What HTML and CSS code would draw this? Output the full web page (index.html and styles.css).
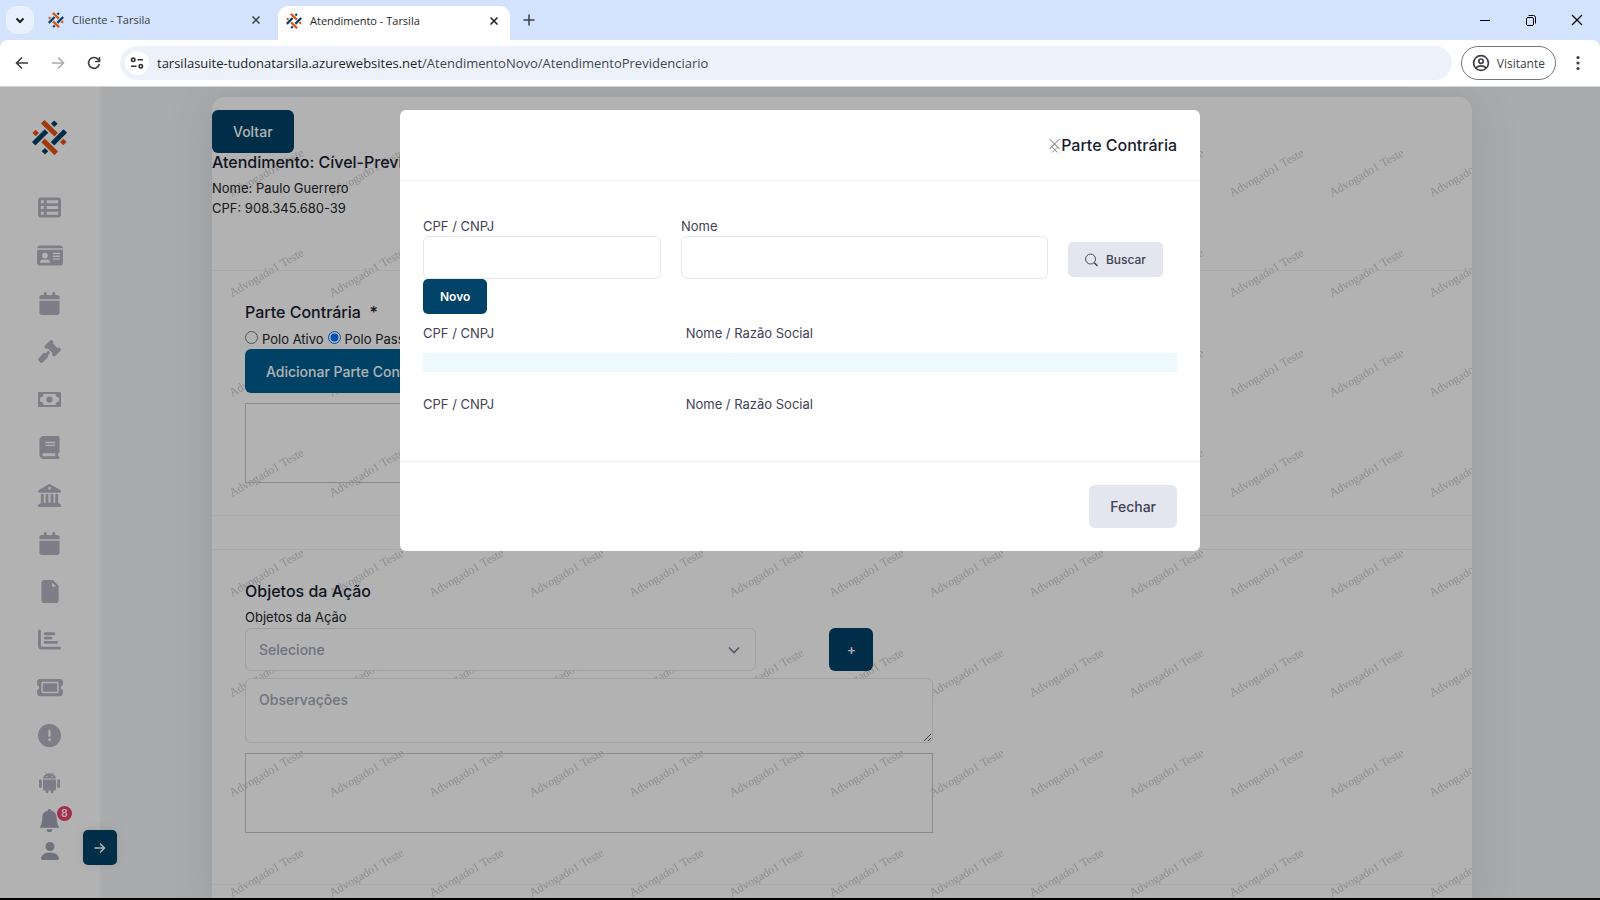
FILE: index.html
```html
<!DOCTYPE html>
<html lang="pt-BR">
<head>
  <meta charset="UTF-8">
  <meta name="viewport" content="width=device-width, initial-scale=1.0">
  <title>Atendimento - Tarsila</title>
  <link rel="stylesheet" href="styles.css">
</head>
<body>
  <!-- shared logo -->
  <svg width="0" height="0" class="defs" aria-hidden="true">
    <symbol id="logo" viewBox="0 0 35 35">
      <g class="logo-orange">
        <path d="M10.7 1.8L24.2 14.8M11 20.4L24.3 33.4"/>
        <path class="dot" d="M3.700 9.700L7 13L3.700 16.300L.400 13zM31.300 18.700L34.600 22L31.300 25.300L28 22z"/>
      </g>
      <g class="logo-blue">
        <path d="M14.5 11L1.7 23.8M33.3 11L20.5 23.8"/>
        <path class="dot" d="M22.300 .400L25.600 3.700L22.300 7L19 3.700zM13 28L16.300 31.300L13 34.600L9.700 31.300z"/>
      </g>
    </symbol>
  </svg>

  <!-- Browser window -->
  <header class="browser">
    <div class="tabs">
      <button class="tab-search" aria-label="Pesquisar guias"><svg width="12" height="12" viewBox="0 0 12 12"><path d="M2.5 4.5L6 8l3.5-3.5" fill="none" stroke="#1f1f1f" stroke-width="2"/></svg></button>
      <div class="tab">
        <svg class="favicon"><use href="#logo"/></svg>
        <span>Cliente - Tarsila</span>
        <button aria-label="Fechar guia"><svg width="8" height="8" viewBox="0 0 8 8"><path d="M.5.5l7 7M7.5.5l-7 7" stroke="#3c3f43" stroke-width="1.5"/></svg></button>
      </div>
      <div class="tab tab-active">
        <svg class="favicon"><use href="#logo"/></svg>
        <span>Atendimento - Tarsila</span>
        <button aria-label="Fechar guia"><svg width="8" height="8" viewBox="0 0 8 8"><path d="M.5.5l7 7M7.5.5l-7 7" stroke="#1f1f1f" stroke-width="1.5"/></svg></button>
      </div>
      <button class="tab-new" aria-label="Nova guia"><svg width="12" height="12" viewBox="0 0 12 12"><path d="M6 .5v11M.5 6h11" stroke="#3c3f43" stroke-width="1.5"/></svg></button>
      <div class="window-buttons">
        <button aria-label="Minimizar"><svg width="12" height="12" viewBox="0 0 12 12"><path d="M1 6.5h10" stroke="#000"/></svg></button>
        <button aria-label="Restaurar"><svg width="12" height="12" viewBox="0 0 12 12"><g fill="none" stroke="#000"><rect x="1.5" y="3.5" width="7" height="8" rx="1.5"/><path d="M3.5 1.5h5a2 2 0 0 1 2 2v6"/></g></svg></button>
        <button aria-label="Fechar"><svg width="12" height="12" viewBox="0 0 12 12"><path d="M1 1l10 10M11 1L1 11" stroke="#000" stroke-width="1.2"/></svg></button>
      </div>
    </div>
    <div class="toolbar">
      <button class="nav-btn" aria-label="Voltar página"><svg width="14" height="14" viewBox="0 0 14 14"><path d="M13 7H2M7 1.5L1.5 7 7 12.5" fill="none" stroke="#3c3f43" stroke-width="1.6"/></svg></button>
      <button class="nav-btn" aria-label="Avançar página"><svg width="14" height="14" viewBox="0 0 14 14"><path d="M1 7h11M7 1.5L12.500 7 7 12.5" fill="none" stroke="#a9abae" stroke-width="1.6"/></svg></button>
      <button class="nav-btn" aria-label="Recarregar"><svg width="14" height="14" viewBox="0 0 14 14"><path d="M12.300 8A5.400 5.400 0 1 1 11.200 3.500L12.500 5M12.500 1v4.500H8.200" fill="none" stroke="#3c3f43" stroke-width="1.6"/></svg></button>
      <div class="address">
        <span class="site-info"><svg width="14" height="12" viewBox="0 0 14 12"><g fill="none" stroke="#303236" stroke-width="1.6"><circle cx="3.2" cy="2.8" r="1.7"/><path d="M7.500 2.800H13M1 9.200h5.500"/><circle cx="10.800" cy="9.200" r="1.700"/></g></svg></span>
        <span class="url">tarsilasuite-tudonatarsila.azurewebsites.net<span>/AtendimentoNovo/AtendimentoPrevidenciario</span></span>
      </div>
      <button class="profile"><svg width="18" height="18" viewBox="0 0 18 18"><g fill="none" stroke="#3c3f43" stroke-width="1.7"><circle cx="9" cy="9" r="7.400"/><circle cx="9" cy="7.200" r="2.200"/><path d="M3.800 13.800c3-2.600 7.400-2.600 10.400 0"/></g></svg>Visitante</button>
      <button class="browser-menu" aria-label="Menu"><svg width="4" height="16" viewBox="0 0 4 16"><g fill="#3c3f43"><circle cx="2" cy="2.500" r="1.600"/><circle cx="2" cy="8" r="1.600"/><circle cx="2" cy="13.500" r="1.600"/></g></svg></button>
    </div>
  </header>

  <div class="app">
    <nav class="sidebar">
      <a href="#" class="brand" aria-label="Tarsila"><svg width="35" height="35"><use href="#logo"/></svg></a>
      <a href="#" aria-label="Lista"><svg width="23" height="23" viewBox="0 0 512 512"><path d="M0 96C0 60.700 28.700 32 64 32H448c35.300 0 64 28.700 64 64V416c0 35.300-28.700 64-64 64H64c-35.300 0-64-28.700-64-64V96zm64 0v64h64V96H64zm384 0H192v64H448V96zM64 224v64h64V224H64zm384 0H192v64H448V224zM64 352v64h64V352H64zm384 0H192v64H448V352z"/></svg></a>
      <a href="#" aria-label="Clientes"><svg width="26" height="23" viewBox="0 0 576 512"><path d="M0 96H576c0-35.300-28.700-64-64-64H64C28.700 32 0 60.700 0 96zm0 32V416c0 35.300 28.700 64 64 64H512c35.300 0 64-28.700 64-64V128H0zM64 405.300c0-29.500 23.900-53.300 53.300-53.300H234.700c29.500 0 53.300 23.900 53.300 53.300c0 5.900-4.800 10.700-10.700 10.700H74.700c-5.900 0-10.700-4.800-10.700-10.700zM176 192a64 64 0 1 1 0 128 64 64 0 1 1 0-128zM352 192H512v32H352zM352 256H512v32H352zM352 320H512v32H352z"/></svg></a>
      <a href="#" aria-label="Agenda"><svg width="21" height="23" viewBox="0 0 448 512"><path d="M96 32V64H48C21.500 64 0 85.500 0 112v48H448V112c0-26.500-21.500-48-48-48H352V32c0-17.700-14.300-32-32-32s-32 14.300-32 32V64H160V32c0-17.700-14.300-32-32-32S96 14.300 96 32zM448 192H0V464c0 26.500 21.500 48 48 48H400c26.500 0 48-21.500 48-48V192z"/></svg></a>
      <a href="#" aria-label="Processos"><svg width="23" height="23" viewBox="0 0 512 512"><path d="M318.600 9.400c-12.500-12.500-32.800-12.500-45.300 0l-120 120c-12.500 12.500-12.500 32.800 0 45.300l16 16c12.500 12.500 32.800 12.500 45.300 0l4-4L325.400 293.400l-4 4c-12.500 12.500-12.500 32.800 0 45.300l16 16c12.500 12.500 32.800 12.500 45.300 0l120-120c12.500-12.500 12.500-32.800 0-45.300l-16-16c-12.500-12.500-32.800-12.500-45.300 0l-4 4L330.600 74.600l4-4c12.500-12.500 12.500-32.800 0-45.300l-16-16zm-152 288c-12.500-12.500-32.800-12.500-45.300 0l-112 112c-12.500 12.500-12.500 32.800 0 45.300l48 48c12.500 12.500 32.800 12.500 45.300 0l112-112c12.500-12.500 12.500-32.800 0-45.300l-1.400-1.400L272 285.300 226.700 240 168 298.700l-1.400-1.400z"/></svg></a>
      <a href="#" aria-label="Financeiro"><svg width="23" height="15" viewBox="0 0 23 15"><path d="M1 0h21a1 1 0 0 1 1 1v13a1 1 0 0 1-1 1H1a1 1 0 0 1-1-1V1a1 1 0 0 1 1-1zM5.500 2A3.500 3.500 0 0 1 2 5.500v4A3.500 3.500 0 0 1 5.500 13h12A3.500 3.500 0 0 1 21 9.500v-4A3.500 3.500 0 0 1 17.500 2zM11.500 4.400a3.100 3.100 0 1 0 0 6.200 3.100 3.100 0 0 0 0-6.200z"/></svg></a>
      <a href="#" aria-label="Biblioteca"><svg width="21" height="23" viewBox="0 0 448 512"><path d="M96 0C43 0 0 43 0 96V416c0 53 43 96 96 96H416c17.700 0 32-14.300 32-32s-14.300-32-32-32V384c17.700 0 32-14.300 32-32V32c0-17.700-14.300-32-32-32H96zm0 384H352v64H96c-17.700 0-32-14.300-32-32s14.300-32 32-32zm32-240c0-8.800 7.200-16 16-16H336c8.800 0 16 7.200 16 16s-7.200 16-16 16H144c-8.800 0-16-7.200-16-16zm16 48H336c8.800 0 16 7.200 16 16s-7.200 16-16 16H144c-8.800 0-16-7.200-16-16s7.200-16 16-16z"/></svg></a>
      <a href="#" aria-label="Tribunais"><svg width="23" height="23" viewBox="0 0 512 512"><path d="M240.100 4.200c9.800-5.600 21.900-5.600 31.800 0L448 104l47.900 28.300c12.600 7.200 18.800 22 15.100 36s-16.400 23.800-30.900 23.800H32c-14.500 0-27.200-9.800-30.900-23.800s2.500-28.800 15.100-36L64 104zM64 224h64V416h40V224h64V416h48V224h64V416h40V224h64V420.300l49.800 33.100c11.700 7.800 17 22.400 12.900 35.900S494.100 512 480 512H32c-14.100 0-26.500-9.200-30.600-22.700s1.100-28.100 12.900-35.900L64 420.300V224zM256 128a32 32 0 1 0 0-64 32 32 0 1 0 0 64z"/></svg></a>
      <a href="#" aria-label="Calendário"><svg width="21" height="23" viewBox="0 0 448 512"><path d="M96 32V64H48C21.500 64 0 85.500 0 112v48H448V112c0-26.500-21.500-48-48-48H352V32c0-17.700-14.300-32-32-32s-32 14.300-32 32V64H160V32c0-17.700-14.300-32-32-32S96 14.300 96 32zM448 192H0V464c0 26.500 21.500 48 48 48H400c26.500 0 48-21.500 48-48V192z"/></svg></a>
      <a href="#" aria-label="Documentos"><svg width="18" height="23" viewBox="0 0 384 512"><path d="M64 0H256L384 128V448c0 35.300-28.700 64-64 64H64c-35.300 0-64-28.700-64-64V64C0 28.700 28.700 0 64 0zM236 56V128c0 12 8 20 20 20H326z"/></svg></a>
      <a href="#" aria-label="Relatórios"><svg width="23" height="23" viewBox="0 0 512 512"><path d="M32 32c17.700 0 32 14.300 32 32V400c0 8.800 7.200 16 16 16H480c17.700 0 32 14.300 32 32s-14.300 32-32 32H80c-44.200 0-80-35.800-80-80V64C0 46.300 14.300 32 32 32zm96 96c0-17.700 14.300-32 32-32H352c17.700 0 32 14.300 32 32s-14.300 32-32 32H160c-17.700 0-32-14.300-32-32zm32 64H288c17.700 0 32 14.300 32 32s-14.300 32-32 32H160c-17.700 0-32-14.300-32-32s14.300-32 32-32zm0 96H416c17.700 0 32 14.300 32 32s-14.300 32-32 32H160c-17.700 0-32-14.300-32-32s14.300-32 32-32z"/></svg></a>
      <a href="#" aria-label="Tickets"><svg width="26" height="23" viewBox="0 0 576 512"><path d="M64 64C28.700 64 0 92.700 0 128v64c0 8.800 7.400 15.700 15.700 18.600C34.500 217.100 48 235 48 256s-13.500 38.900-32.300 45.400C7.400 304.300 0 311.200 0 320v64c0 35.300 28.700 64 64 64H512c35.300 0 64-28.700 64-64V320c0-8.800-7.400-15.700-15.700-18.600C541.500 294.900 528 277 528 256s13.500-38.900 32.300-45.400c8.300-2.900 15.700-9.800 15.700-18.600V128c0-35.300-28.700-64-64-64H64zM128 160H448V352H128zM96 160c0-17.700 14.300-32 32-32H448c17.700 0 32 14.300 32 32V352c0 17.700-14.300 32-32 32H128c-17.700 0-32-14.300-32-32V160z"/></svg></a>
      <a href="#" aria-label="Avisos"><svg width="23" height="23" viewBox="0 0 512 512"><path d="M256 512A256 256 0 1 0 256 0a256 256 0 1 0 0 512zm0-384c13.300 0 24 10.700 24 24V264c0 13.300-10.700 24-24 24s-24-10.700-24-24V152c0-13.300 10.700-24 24-24zM224 352a32 32 0 1 1 64 0 32 32 0 1 1-64 0z"/></svg></a>
      <a href="#" aria-label="Aplicativo"><svg width="21" height="22" viewBox="0 0 21 22"><path d="M4 6.500A6.500 5.500 0 0 1 7.300 2L6 .4l.4-.3 1.400 1.600a8 8 0 0 1 5.400 0L14.600.1l.4.300L13.700 2A6.500 5.500 0 0 1 17 6.500zM7.700 3.700a.7.700 0 1 0 0 1.400.7.700 0 0 0 0-1.400zM13.300 3.700a.7.700 0 1 0 0 1.400.7.700 0 0 0 0-1.400zM4 7.500h13V17a1.500 1.500 0 0 1-1.500 1.500h-1V20a1.400 1.400 0 0 1-2.800 0v-1.500H9.300V20a1.400 1.400 0 0 1-2.800 0v-1.500h-1A1.500 1.500 0 0 1 4 17zM0 8.700a1.400 1.400 0 0 1 2.800 0v6a1.400 1.400 0 0 1-2.800 0zM18.200 8.700a1.400 1.400 0 0 1 2.800 0v6a1.400 1.400 0 0 1-2.800 0z"/></svg></a>
      <a href="#" class="bell" aria-label="Notificações"><svg width="23" height="23" viewBox="0 0 16 16"><path d="M8 16a2 2 0 0 0 2-2H6a2 2 0 0 0 2 2zm.995-14.901a1 1 0 1 0-1.990 0A5.002 5.002 0 0 0 3 6c0 1.098-.5 6-2 7h14c-1.500-1-2-5.902-2-7 0-2.420-1.720-4.440-4.005-4.901z"/></svg><span class="badge">8</span></a>
      <a href="#" class="user" aria-label="Usuário"><svg width="24" height="24" viewBox="0 0 16 16"><path d="M3 14s-1 0-1-1 1-4 6-4 6 3 6 4-1 1-1 1H3zm5-6a3 3 0 1 0 0-6 3 3 0 0 0 0 6z"/></svg></a>
      <button class="sidebar-toggle" aria-label="Expandir menu"><svg width="12" height="12" viewBox="0 0 12 12"><path d="M.5 6h10M6 1.500L10.500 6 6 10.500" fill="none" stroke="#fff" stroke-width="1.500"/></svg></button>
    </nav>

    <main class="content">
      <div class="card">
        <svg class="watermark" aria-hidden="true">
          <defs>
            <pattern id="mark" width="100" height="100" patternUnits="userSpaceOnUse">
              <text x="20" y="100" transform="rotate(-30 20 100)">Advogado1 Teste</text>
            </pattern>
          </defs>
          <rect width="100%" height="100%" fill="url(#mark)"/>
        </svg>

        <section class="card-head">
          <button class="btn btn-primary">Voltar</button>
          <h3>Atendimento: Cível-Previdenciário</h3>
          <p>Nome: Paulo Guerrero</p>
          <p>CPF: 908.345.680-39</p>
        </section>

        <section class="card-section">
          <h3>Parte Contrária &nbsp;*</h3>
          <div class="polo">
            <input type="radio" name="polo" id="polo-ativo">
            <label for="polo-ativo">Polo Ativo</label>
            <input type="radio" name="polo" id="polo-passivo" checked>
            <label for="polo-passivo">Polo Passivo</label>
          </div>
          <button class="btn btn-add">Adicionar Parte Contrária</button>
          <div class="list-box"></div>
        </section>

        <section class="card-band"></section>

        <section class="card-section">
          <h3>Objetos da Ação</h3>
          <label class="field-label" for="objetos">Objetos da Ação</label>
          <div class="select-row">
            <select id="objetos" class="field">
              <option>Selecione</option>
            </select>
            <button class="btn btn-primary btn-plus" aria-label="Adicionar objeto">+</button>
          </div>
          <textarea class="field" placeholder="Observações" aria-label="Observações"></textarea>
          <div class="list-box"></div>
        </section>

        <section class="card-band"></section>
      </div>
    </main>

    <!-- Modal Parte Contrária -->
    <div class="backdrop">
      <div class="modal" role="dialog" aria-labelledby="modal-title">
        <div class="modal-header">
          <button class="close" aria-label="Fechar janela"><svg width="12" height="15" viewBox="0 0 12 15"><g stroke="#6c6c6c"><path d="M.5 1l10 10M10.500 1L.5 11"/><path d="M3 9l5.500 5.500M8.500 9L3 14.500" stroke="#8c8c8c"/></g></svg></button>
          <h3 id="modal-title">Parte Contrária</h3>
        </div>
        <div class="modal-body">
          <form class="search">
            <div class="search-doc">
              <label for="doc">CPF / CNPJ</label>
              <input type="text" id="doc" class="field">
            </div>
            <div class="search-name">
              <label for="nome">Nome</label>
              <input type="text" id="nome" class="field">
            </div>
            <button type="button" class="btn btn-sm btn-light"><svg width="14" height="14" viewBox="0 0 14 14"><g fill="none" stroke="#3f4254"><circle cx="6" cy="6" r="5.400"/><path d="M10 10L13.500 13.500" stroke-width="1.700"/></g></svg>Buscar</button>
          </form>
          <button class="btn btn-sm btn-primary">Novo</button>
          <div class="result-head">
            <span>CPF / CNPJ</span>
            <span>Nome / Razão Social</span>
          </div>
          <div class="result-bar"></div>
          <div class="result-head">
            <span>CPF / CNPJ</span>
            <span>Nome / Razão Social</span>
          </div>
        </div>
        <div class="modal-footer">
          <button class="btn btn-light">Fechar</button>
        </div>
      </div>
    </div>
  </div>
</body>
</html>
```
FILE: styles.css
```css
* {
  box-sizing: border-box;
}
body {
  margin: 0;
  height: 100vh;
  display: flex;
  flex-direction: column;
  overflow: hidden;
  border-bottom: 2px solid #000;
  font-family: Inter, sans-serif;
  font-size: 13px;
  line-height: 20px;
  color: #212529;
}
button {
  font-family: inherit;
  border: none;
  padding: 0;
  background: none;
  cursor: pointer;
}
h3, p {
  margin: 0;
}
.defs {
  position: absolute;
}
.logo-orange {
  stroke: #e65210;
  fill: none;
  stroke-width: 5;
}
.logo-blue {
  stroke: #004268;
  fill: none;
  stroke-width: 5;
}
.logo-orange .dot {
  fill: #e65210;
  stroke: none;
}
.logo-blue .dot {
  fill: #004268;
  stroke: none;
}

/* Browser */
.browser {
  background-color: #d3e3fd;
  font-family: "Open Sans", sans-serif;
  font-size: 11px;
}
.tabs {
  display: flex;
  align-items: center;
  height: 40px;
  padding-left: 6px;
}
.tab-search {
  display: flex;
  align-items: center;
  justify-content: center;
  width: 28px;
  height: 28px;
  border-radius: 10px;
  background-color: #e9f1fe;
}
.tab {
  display: flex;
  align-items: center;
  gap: 8px;
  width: 238px;
  height: 34px;
  padding: 0 18px 0 8px;
  margin-left: 6px;
  color: #3c3f43;
}
.tab span {
  flex: 1;
}
.tab-active {
  align-self: flex-end;
  width: 232px;
  padding: 0 12px 5px 8px;
  background-color: #fff;
  border-radius: 10px 10px 0 0;
  margin-left: 0;
  color: #1f1f1f;
}
.favicon {
  width: 16px;
  height: 16px;
}
.tab button, .tab-new, .window-buttons button {
  display: flex;
  align-items: center;
  justify-content: center;
}
.tab-new {
  margin-left: 13px;
}
.window-buttons {
  display: flex;
  margin-left: auto;
}
.window-buttons button {
  width: 46px;
  height: 40px;
}
.toolbar {
  display: flex;
  align-items: center;
  height: 47px;
  padding: 0 14px 0 4px;
  background-color: #fff;
  border-bottom: 1px solid #d5d5d5;
  border-radius: 8px 8px 0 0;
}
.nav-btn {
  display: flex;
  align-items: center;
  justify-content: center;
  width: 36px;
  height: 34px;
}
.address {
  flex: 1;
  display: flex;
  align-items: center;
  gap: 8px;
  height: 34px;
  margin: 0 9px 0 8px;
  padding-left: 5px;
  border-radius: 17px;
  background-color: #edf1fa;
}
.site-info {
  display: flex;
  align-items: center;
  justify-content: center;
  width: 24px;
  height: 24px;
  border-radius: 50%;
  background-color: #fff;
}
.url {
  font-size: 13px;
  color: #1f1f1f;
}
.url span {
  color: #44474b;
}
.profile {
  display: flex;
  align-items: center;
  gap: 7px;
  height: 34px;
  padding: 0 10px;
  border: 1px solid #747775;
  border-radius: 17px;
  font-size: 12px;
  color: #3c3f43;
}
.browser-menu {
  display: flex;
  justify-content: center;
  width: 16px;
  margin-left: 14px;
}

/* App */
.app {
  position: relative;
  flex: 1;
  display: flex;
  min-height: 0;
  overflow: hidden;
  background-color: #f3f5f8;
}
.sidebar {
  position: relative;
  display: flex;
  flex-direction: column;
  flex-shrink: 0;
  width: 100px;
  padding: 26px 1px 0 0;
  background-color: #fff;
}
.sidebar a {
  display: flex;
  flex-shrink: 0;
  align-items: center;
  justify-content: center;
  height: 48px;
}
.sidebar a svg {
  fill: #b5b5c3;
  fill-rule: evenodd;
}
.sidebar .brand {
  margin-bottom: 22px;
}
.sidebar .bell {
  position: relative;
  height: 26px;
}
.sidebar .user {
  height: 36px;
}
.sidebar .bell svg, .sidebar .user svg {
  fill: #a1a5b7;
}
.badge {
  position: absolute;
  top: -1px;
  left: 57px;
  width: 15px;
  height: 15px;
  border-radius: 50%;
  background-color: #f1416c;
  color: #fff;
  font-size: 10px;
  font-weight: 600;
  line-height: 15px;
  text-align: center;
}
.sidebar-toggle {
  position: absolute;
  bottom: 33px;
  right: -17px;
  z-index: 1;
  display: flex;
  align-items: center;
  justify-content: center;
  width: 34px;
  height: 35px;
  border-radius: 5px;
  background-color: #004268;
  box-shadow: 0 0 10px rgba(0, 0, 0, 0.1);
}
.content {
  flex: 1;
  padding: 10px 128px 0 112px;
}
.card {
  position: relative;
  padding-top: 13px;
  background-color: #fff;
  border-radius: 13px;
  box-shadow: 0 0 50px rgba(0, 66, 104, 0.12);
}
.watermark {
  position: absolute;
  top: 0;
  left: 0;
  width: 100%;
  height: 100%;
}
.watermark text {
  font-family: "Liberation Serif", serif;
  font-size: 12px;
  fill: #ccc;
}
.card section {
  position: relative;
  border-bottom: 1px solid #eff2f5;
}
.card-head {
  padding-bottom: 52px;
}
.card-section {
  padding: 32px 33px;
}
.card-section:nth-of-type(4) {
  padding-bottom: 51px;
}
.card-band {
  height: 34px;
}
h3 {
  font-size: 16px;
  line-height: 19px;
  font-weight: 500;
  color: #181c32;
}
.card h3 {
  margin-bottom: 6px;
}
.btn {
  display: flex;
  align-items: center;
  justify-content: center;
  height: 43px;
  padding: 0 21px;
  border-radius: 6px;
  font-size: 14px;
  font-weight: 500;
}
.btn-sm {
  gap: 8px;
  height: 35px;
  padding: 0 17px;
  border-radius: 5px;
  font-size: 12px;
}
.btn-primary {
  background-color: #004268;
  color: #fff;
}
.btn-sm.btn-primary {
  font-weight: 600;
}
.btn-add {
  height: 44px;
  background-color: #005d93;
  color: #fff;
}
.btn-light {
  background-color: #e4e6ef;
  color: #3f4254;
}
.polo {
  display: flex;
  align-items: flex-end;
  height: 21px;
}
.polo input {
  width: 13px;
  height: 13px;
  margin: 0 4px 5px 0;
}
.polo label {
  margin-right: 4px;
}
.field {
  display: block;
  width: 100%;
  height: 43px;
  padding: 0 13px;
  border: 1px solid #e4e6ef;
  border-radius: 6px;
  background-color: #fff;
  font-family: inherit;
  font-size: 14px;
  font-weight: 500;
  color: #a1a5b7;
}
.field::placeholder {
  color: #a1a5b7;
}
select.field {
  width: calc(75% - 5px);
  appearance: none;
  background-image: url("data:image/svg+xml,%3Csvg xmlns='http://www.w3.org/2000/svg' width='12' height='8' viewBox='0 0 12 8'%3E%3Cpath d='M1 1.500l5 5 5-5' fill='none' stroke='%237e8299' stroke-width='1.600'/%3E%3C/svg%3E");
  background-repeat: no-repeat;
  background-position: right 15px center;
}
textarea.field {
  width: calc(58.333% - 8px);
  height: 65px;
  margin-top: 7px;
  padding: 11px 13px;
  line-height: 20px;
}
.field-label {
  display: block;
  height: 21px;
}
.select-row {
  display: flex;
  gap: 73px;
  width: calc(58.333% - 8px);
}
.btn-plus {
  width: 44px;
  padding: 0;
}
.list-box {
  width: calc(58.333% - 8px);
  height: 80px;
  margin-top: 10px;
  border: 1px solid #c8c8c8;
}

/* Modal */
.backdrop {
  position: absolute;
  top: 0;
  left: 0;
  z-index: 2;
  display: flex;
  align-items: flex-start;
  justify-content: center;
  width: 100%;
  height: 100%;
  padding-top: 23px;
  background-color: rgba(0, 0, 0, 0.3);
}
.modal {
  width: 100%;
  max-width: 800px;
  background-color: #fff;
  border-radius: 6px;
  color: #3f4254;
}
.modal-header {
  display: flex;
  align-items: center;
  justify-content: flex-end;
  height: 71px;
  padding: 0 23px;
  border-bottom: 1px solid #eff2f5;
}
.close {
  display: flex;
}
.modal-body {
  padding: 35px 23px 37px;
}
.search {
  display: grid;
  grid-template-columns: repeat(12, minmax(0, 1fr));
  column-gap: 20px;
  align-items: end;
}
.search label {
  display: block;
}
.search-doc {
  grid-column: span 4;
}
.search-name {
  grid-column: span 6;
}
.search .btn {
  grid-column: span 2;
  justify-self: start;
  width: 95px;
  margin-bottom: 2px;
}
.result-head {
  display: grid;
  grid-template-columns: 1fr 2fr;
  column-gap: 17px;
  padding: 9px 0 10px;
}
.result-bar {
  height: 19px;
  margin-bottom: 13px;
  background-color: #edf9fa;
}
.modal-footer {
  display: flex;
  justify-content: flex-end;
  padding: 23px;
  border-top: 1px solid #eff2f5;
}
```
